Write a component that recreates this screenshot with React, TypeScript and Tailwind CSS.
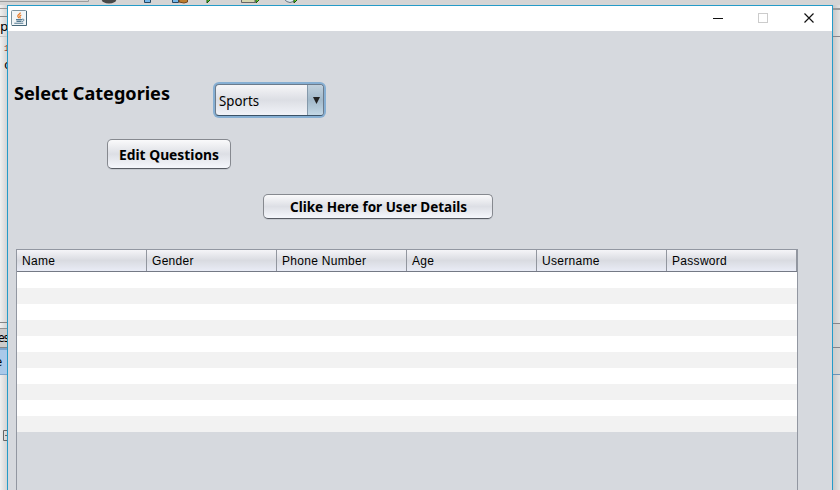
import type { ReactNode } from "react";

const columns = ["Name", "Gender", "Phone Number", "Age", "Username", "Password"];
const tahoma = "font-['DejaVu_Sans_Condensed','DejaVu_Sans',sans-serif] [font-stretch:condensed]";
const notoSans = "font-['Noto_Sans',sans-serif]";

function Label({ children, width, className, baseline = 14, weight = 700, size = 14, face = tahoma }: {
  children: string; width: number; className?: string; baseline?: number; weight?: number; size?: number; face?: string;
}) {
  return (
    <svg width={width} height="20" className={`block shrink-0 overflow-visible ${className ?? ""}`}>
      <text x="0" y={baseline} textLength={width} lengthAdjust="spacingAndGlyphs" className={face} fontSize={size} fontWeight={weight} fill="#000">
        {children}
      </text>
    </svg>
  );
}

function JavaIcon() {
  return (
    <svg width="16" height="16" viewBox="0 0 16 16" fill="none">
      <rect x="0.5" y="0.5" width="15" height="15" rx="1" fill="#f1f5f7" stroke="#7b929e" />
      <path d="M1 15.5h14.5V1" stroke="#456779" />
      <path d="M9.300 2.500c.3 1.500-3 2.200-2.500 3.800.2.700 1.100 1 1.100 1.900M10.300 5c-1.800.7-1.900 1.500-1.200 2.200.3.400 0 .8-.3 1" stroke="#e97924" strokeWidth="1.200" />
      <path d="M5 9.600h6M5.500 11.400h5M3.300 13.300h9" stroke="#537a91" strokeWidth="1.100" />
      <path d="M11 9.300c2.700-.5 2.600 1.500.1 2.200" stroke="#537a91" />
    </svg>
  );
}

function Toolbar() {
  return (
    <div className="h-[5px] w-[840px] shrink-0 overflow-hidden bg-[#d5d5d5]">
      <svg width="840" height="5">
        <path d="M0 1.500h88.500V0" fill="none" stroke="#9b9d9e" />
        <ellipse cx="109" cy="-1" rx="7.500" ry="4.500" fill="#484848" />
        <path d="M144.500-1v3.500h6V-1" fill="#75b7e9" stroke="#244864" />
        <path d="M172.500-1v3.500h6V-1" fill="#75b7e9" stroke="#244864" />
        <path d="M179-1v3l5 1 3.500-1V-1" fill="#bd7d2e" stroke="#71451c" />
        <path d="M207-1v4l4-4" fill="#55c928" stroke="#174d0e" />
        <path d="M241.500-1v3.500H255V-1" fill="#d5d5b0" stroke="#666" />
        <path d="M256-1v4l4-4" fill="#70df2c" stroke="#174d0e" />
        <path d="M284-1q6 7 12 0" fill="#dce9f0" stroke="#647482" />
        <path d="M294-1v4l4-4" fill="#70df2c" stroke="#174d0e" />
      </svg>
    </div>
  );
}

function LeftStrip() {
  return (
    <div className="flex w-[7px] shrink-0 flex-col overflow-hidden bg-linear-to-r from-[#f0f0f0] to-[#d4d4d4] text-[14px] leading-none">
      <div className="h-1 shrink-0 border-b border-[#999]" />
      <div className="h-2 shrink-0 border-b border-[#888]" />
      <div className="h-5 shrink-0 border-b border-[#c7c7c7] pt-[3px] font-['DejaVu_Sans',sans-serif] text-[13px]">p</div>
      <div className="h-4 shrink-0 pt-2 pl-1 font-['Liberation_Mono',monospace] text-[9px] text-[#973e35]">1</div>
      <div className="h-[270px] shrink-0 border-b border-[#858585] pt-[6px] pl-1 font-['Liberation_Mono',monospace] text-[13px]">c</div>
      <div className="h-[6px] shrink-0 border-b border-[#929292]" />
      <div className="h-[19px] shrink-0 border-b border-[#858585] bg-[#cdcdcd] pt-[3px] font-['DejaVu_Sans_Condensed',sans-serif] text-[12px] tracking-[-1px]"><span className="-ml-[2px]">es</span></div>
      <div className="h-[27px] shrink-0 border-t-2 border-b border-[#7da5ce] bg-[#a9c9e9] pt-[5px] font-['DejaVu_Sans_Condensed',sans-serif] text-[13px]"><span className="-ml-[5px]">e</span></div>
      <svg width="7" height="115" className="shrink-0"><path d="M8 55.500H3.500v10H8M5 60.500h3" fill="none" stroke="#666" /></svg>
    </div>
  );
}

function RightStrip() {
  return (
    <div className="flex w-[7px] shrink-0 flex-col bg-linear-to-r from-[#c8c8c8] to-[#e4e3e2]">
      <div className="h-[5px] shrink-0 border-b-2 border-[#999]" />
      <div className="h-[27px] shrink-0 border-b border-[#85858b]" />
      <div className="h-[287px] shrink-0 border-b border-[#85858b]" />
      <div className="h-6 shrink-0 border-b border-[#85858b] bg-[#d1d0cf]/60" />
      <div className="h-[27px] shrink-0 border-b border-[#6b93b7] bg-[#d1d0cf]/60" />
    </div>
  );
}

function TitleBar() {
  return (
    <div className="flex h-[25px] shrink-0 justify-between bg-white pt-1 pl-[3px]">
      <JavaIcon />
      <svg width="126" height="21" fill="none">
        <path d="M7 8.500h10" stroke="#111" />
        <rect x="52.500" y="3.500" width="9" height="9" stroke="#ccc" />
        <path d="m98.500 3.500 9 9m0-9-9 9" stroke="#111" strokeWidth="1.200" />
      </svg>
    </div>
  );
}

function NimbusButton({ children, className }: { children: ReactNode; className: string }) {
  return (
    <button className={`flex rounded-[5px] border border-[#86898f] border-b-[#575b63] bg-linear-to-b from-[#fafafb] via-[#dddfe5] to-[#f5f7fc] shadow-[0_1px_0_#c4c8ce] ${className}`}>
      {children}
    </button>
  );
}

function Table() {
  return (
    <div className="mt-[30px] ml-2 h-[242px] w-[782px] shrink-0 border-x border-t border-[#9297a1]">
      <div className="flex h-[22px] border-b border-[#747985] bg-linear-to-b from-[#f5f5f8] via-[#d9dbe1] to-[#e9ecf6]">
        {columns.map((column) => (
          <div key={column} className="w-[130px] shrink-0 border-r border-[#92969f] pt-1 pl-[5px] font-['Liberation_Sans',Arial,sans-serif] text-[12px] leading-[14px] tracking-[0.300px] text-black">{column}</div>
        ))}
      </div>
      {Array.from({ length: 10 }, (_, row) => (
        <div key={row} className="h-4 bg-white odd:bg-[#f2f2f2]" />
      ))}
    </div>
  );
}

export default function App() {
  return (
    <div className="flex h-[490px] w-[840px] flex-col overflow-hidden">
      <Toolbar />
      <div className="flex h-[485px]">
        <LeftStrip />
        <main className="flex w-[826px] shrink-0 flex-col overflow-hidden border-x border-t border-[#259bc8] bg-[#d6d9de]">
          <TitleBar />
          <div className="flex h-[87px] shrink-0 items-start pt-[51px] pl-[6px]">
            <Label width={156} size={18} baseline={18} face={notoSans}>Select Categories</Label>
            <div className="ml-[43px] flex h-9 w-[113px] shrink-0 rounded-[6px] bg-[#86afd3] p-[2px]">
              <div className="flex w-full overflow-hidden rounded-[4px] border border-[#6c7b8b] border-b-[#3c5367] bg-linear-to-b from-[#f6f6f8] via-[#dcdee4] to-[#f1f3f8]">
                <div className="flex-1 pt-[3px] pl-[3px]"><Label width={40} weight={400} size={14} baseline={18} face={notoSans}>Sports</Label></div>
                <div className="flex w-4 items-center justify-center border-l border-[#8499ab] bg-linear-to-b from-[#c1d1dd] via-[#a2b9ca] to-[#c3d8e6]">
                  <svg width="7" height="7" className="ml-px"><path d="M0 0h7L3.500 7Z" fill="#222" /></svg>
                </div>
              </div>
            </div>
          </div>
          <NimbusButton className="mt-[21px] ml-[99px] h-[30px] w-[124px] shrink-0 pt-[6px] pl-[11px]"><Label width={100} face={notoSans}>Edit Questions</Label></NimbusButton>
          <NimbusButton className="mt-[25px] ml-[255px] h-[25px] w-[230px] shrink-0 pt-[3px] pl-[26px]"><Label width={177} face={notoSans}>Clike Here for User Details</Label></NimbusButton>
          <Table />
        </main>
        <RightStrip />
      </div>
    </div>
  );
}
